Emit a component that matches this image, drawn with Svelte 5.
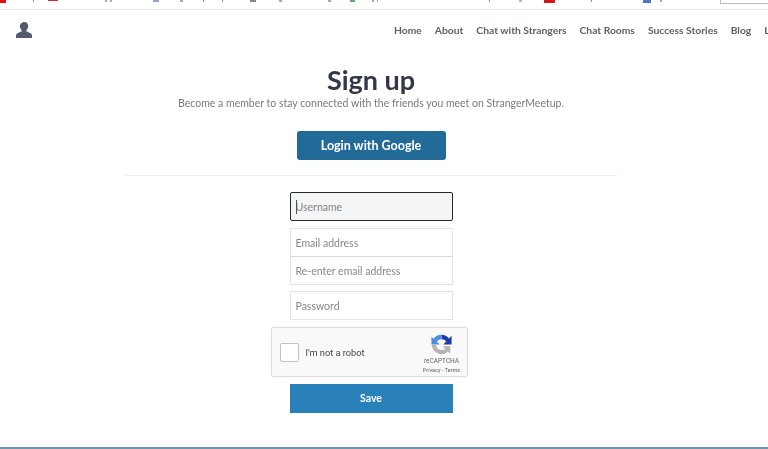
<script>
  const links = ['Home', 'About', 'Chat with Strangers', 'Chat Rooms', 'Success Stories', 'Blog', 'Login'];
  const marks = [
    { x: 0, w: 6, h: 3, c: '#e01010' },
    { x: 48, w: 10, h: 1, c: '#d03030' },
    { x: 33, w: 1, h: 2, c: '#999' },
    { x: 105, w: 2, h: 2, c: '#aaa' },
    { x: 110, w: 2, h: 2, c: '#aaa' },
    { x: 153, w: 6, h: 2, c: '#8fa6d0' },
    { x: 180, w: 3, h: 2, c: '#aaa' },
    { x: 203, w: 1, h: 2, c: '#999' },
    { x: 222, w: 1, h: 2, c: '#999' },
    { x: 250, w: 6, h: 2, c: '#888' },
    { x: 279, w: 3, h: 2, c: '#aaa' },
    { x: 328, w: 3, h: 2, c: '#aaa' },
    { x: 350, w: 5, h: 2, c: '#5cae62' },
    { x: 372, w: 2, h: 2, c: '#aaa' },
    { x: 377, w: 1, h: 2, c: '#aaa' },
    { x: 489, w: 1, h: 2, c: '#999' },
    { x: 519, w: 3, h: 2, c: '#bbb' },
    { x: 544, w: 11, h: 3, c: '#d8141c' },
    { x: 591, w: 1, h: 2, c: '#999' },
    { x: 643, w: 8, h: 3, c: '#4a78c8' },
    { x: 660, w: 2, h: 2, c: '#aaa' },
  ];
</script>

<div class="page">
  <div class="chrome">
    {#each marks as m}
      <span class="mark" style="left:{m.x}px;width:{m.w}px;height:{m.h}px;background:{m.c}"></span>
    {/each}
    <span class="search"></span>
  </div>

  <header class="nav">
    <svg class="user" viewBox="0 0 18 17" width="17" height="16" aria-hidden="true">
      <path fill="#545a6b" d="M9 0c2.400 0 3.900 1.800 3.900 4.200 0 1.700-.7 3.300-1.600 4.200-.4.5-.4 1.300.2 1.700 1.600.9 5.500 1.600 5.500 4.300V17H0v-2.600c0-2.700 3.900-3.400 5.500-4.300.6-.4.6-1.200.2-1.700C4.800 7.500 4.100 5.900 4.100 4.200 4.100 1.800 6.600 0 9 0z"/>
    </svg>
    <nav class="links">
      {#each links as l}<span class="link">{l}</span>{/each}
    </nav>
  </header>

  <main class="main">
    <h1>Sign up</h1>
    <p class="sub">Become a member to stay connected with the friends you meet on StrangerMeetup.</p>
    <div class="google">Login with Google</div>
    <hr />
    <form class="form">
      <div class="field focus"><span class="caret"></span>Username</div>
      <div class="pair">
        <div class="field">Email address</div>
        <div class="field joined">Re-enter email address</div>
      </div>
      <div class="field">Password</div>
      <div class="captcha">
        <span class="box"></span>
        <span class="robot">I'm not a robot</span>
        <div class="brand">
          <svg viewBox="0 0 24 24" width="21" height="21" aria-hidden="true">
            <path fill="#1c3aa9" d="M12 1a11 11 0 0 1 8.500 4L23.500 2v10H14l3.500-3.500A7 7 0 0 0 12 6z"/>
            <path fill="#4a90e2" d="M12 1A11 11 0 0 0 3 5.500L.5 3v9H10L6.500 8.500A7 7 0 0 1 12 6z"/>
            <path fill="#b4b4b4" d="M1 12a11 11 0 0 0 18.500 8l2.500 2.500V14h-8.500l3 3A7 7 0 0 1 5.500 12z"/>
          </svg>
          <span class="rc">reCAPTCHA</span>
          <span class="terms">Privacy - Terms</span>
        </div>
      </div>
      <div class="save">Save</div>
    </form>
  </main>
  <div class="rule"></div>
</div>

<style>
  :global(body) {
    margin: 0;
    background: #fff;
  }
  .page {
    width: 768px;
    height: 449px;
    overflow: hidden;
    display: flex;
    flex-direction: column;
    font-family: Lato, "Open Sans", sans-serif;
    color: #333747;
    filter: blur(0.4px);
  }
  .chrome {
    height: 9px;
    flex: none;
    border-bottom: 1px solid #e8e8ea;
    position: relative;
  }
  .mark {
    position: absolute;
    top: 0;
  }
  .search {
    position: absolute;
    top: -1px;
    right: 0;
    width: 47px;
    height: 3px;
    border: 1px solid #bbb;
    border-right: none;
  }
  .nav {
    flex: none;
    height: 40px;
    display: flex;
    align-items: center;
    padding-left: 16px;
    box-sizing: border-box;
  }
  .user { flex: none; }
  .links {
    margin-left: 361px;
    padding-bottom: 1px;
    display: flex;
    gap: 13px;
    font-size: 10.300px;
    font-weight: 700;
    color: #5d6068;
    white-space: nowrap;
  }
  .main {
    width: 742px;
    display: flex;
    flex-direction: column;
    align-items: center;
    flex: 1;
    min-height: 0;
  }
  h1 {
    margin: 15px 0 0;
    font-size: 27px;
    line-height: 30px;
    font-weight: 700;
    color: #333747;
  }
  .sub {
    margin: 0;
    font-size: 10.500px;
    line-height: 16px;
    color: #777a80;
  }
  .google {
    margin-top: 20px;
    width: 149px;
    height: 29px;
    line-height: 30px;
    text-align: center;
    background: #226a97;
    border-radius: 3px;
    color: #fff;
    font-size: 12.500px;
    font-weight: 700;
  }
  hr {
    width: 492px;
    margin: 15px 0 16px;
    border: none;
    border-top: 1px solid #eeeeee;
  }
  .form {
    width: 163px;
    display: flex;
    flex-direction: column;
    align-items: center;
  }
  .field {
    width: 163px;
    height: 29px;
    box-sizing: border-box;
    border: 1px solid #e4e4e6;
    padding-left: 5px;
    font-size: 10.500px;
    line-height: 28px;
    color: #85878c;
    background: #fff;
  }
  .field.focus {
    border: 1px solid #26272b;
    border-radius: 2px;
    background: #f4f5f7;
    margin-bottom: 7px;
    position: relative;
  }
  .caret {
    position: absolute;
    left: 5px;
    top: 7px;
    width: 1px;
    height: 14px;
    background: #555;
  }
  .pair {
    display: flex;
    flex-direction: column;
    margin-bottom: 6px;
  }
  .joined {
    border-top-color: #d6d6d8;
    margin-top: -1px;
  }
  .captcha {
    margin: 7px 4px 0 0;
    width: 197px;
    height: 50px;
    box-sizing: border-box;
    flex: none;
    border: 1px solid #dedede;
    border-radius: 2px;
    background: #f9f9f9;
    display: flex;
    align-items: center;
    padding-left: 8px;
    box-shadow: 0 0 2px rgba(0,0,0,.08);
  }
  .box {
    width: 19px;
    height: 19px;
    box-sizing: border-box;
    flex: none;
    border: 1px solid #c1c1c1;
    border-radius: 2px;
    background: #fff;
  }
  .robot {
    margin-left: 7px;
    font-family: Roboto, sans-serif;
    font-size: 9.200px;
    color: #444;
    flex: 1;
  }
  .brand {
    width: 50px;
    margin: 3px 0 0 0;
    display: flex;
    flex-direction: column;
    align-items: center;
    color: #666;
    font-family: Roboto, sans-serif;
  }
  .rc { font-size: 6.500px; line-height: 9px; margin-top: 2px; }
  .terms { font-size: 5.500px; line-height: 8px; }
  .save {
    margin-top: 7px;
    width: 163px;
    height: 29px;
    flex: none;
    line-height: 29px;
    text-align: center;
    background: #2a80b9;
    color: #fff;
    font-size: 10.500px;
    font-weight: 700;
  }
  .rule {
    flex: none;
    height: 2px;
    margin-top: auto;
    background: #6a97ad;
  }
</style>
